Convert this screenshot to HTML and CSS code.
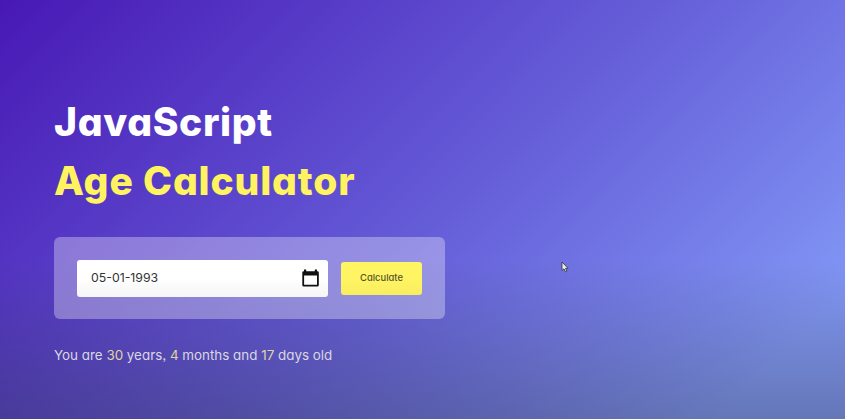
FILE: index.html
```html
<!DOCTYPE html>
<html lang="en">
<head>
<meta charset="utf-8">
<title>JavaScript Age Calculator</title>
<link rel="stylesheet" href="styles.css">
</head>
<body>
<main class="container">
  <h1 class="title"><span class="line-one">JavaScript</span><br><span class="accent">Age Calculator</span></h1>
  <div class="input-box">
    <div class="date-field">
      <span class="date">05-01-1993</span>
      <svg class="calendar" viewBox="0 0 17 18"><path fill="#111" fill-rule="evenodd" d="M2 0.5h2.200v1.700h8.600V.5H15v1.700h.5q1.300 0 1.300 1.400v12.500q0 1.500-1.400 1.500H1.700Q.3 17.600.3 16.100V3.600Q.3 2.200 1.600 2.200H2zM2.100 6.400v9.400h12.900V6.400z"/></svg>
    </div>
    <button class="calculate">Calculate</button>
  </div>
  <p class="result">You are <span>30</span> years, <span>4</span> months and <span>17</span> days old</p>
</main>
<svg class="cursor" viewBox="0 0 8 12"><path d="M1 1v8.500l2-1.700 1.500 3 1.300-.7-1.300-2.800H7z" fill="#eee" stroke="#333" stroke-width=".8"/></svg>
</body>
</html>
```
FILE: styles.css
```css
* { box-sizing: border-box; margin: 0; padding: 0; }
body {
  height: 419px;
  overflow: hidden;
  font-family: Inter, "Liberation Sans", sans-serif;
  font-feature-settings: "cv11", "ss03";
  color: #fff;
  background:
    linear-gradient(180deg, rgba(20,30,10,0) 62%, rgba(20,30,10,.26) 100%),
    linear-gradient(135deg, #4818b5 0%, #655dd8 52%, #8196f5 90%);
}
.container { padding: 92px 0 0 54px; width: 445px; }
.title { font-size: 39px; line-height: 59px; font-weight: 800; white-space: nowrap; }
.line-one { letter-spacing: 0.65px; }
.accent { color: #fff45f; letter-spacing: 0.85px; }
.input-box {
  margin-top: 27px;
  height: 82px;
  padding: 0 23px;
  display: flex;
  align-items: center;
  gap: 13px;
  border-radius: 6px;
  background: rgba(255,255,255,.32);
}
.date-field {
  width: 251px;
  height: 37px;
  padding: 0 9px 0 14px;
  display: flex;
  align-items: center;
  justify-content: space-between;
  border-radius: 3px;
  color: #333;
  font-size: 12.3px;
  background: linear-gradient(#fff 50%, #f5f5f5);
}
.date { padding-bottom: 2px; }
.calendar { width: 17px; height: 18px; }
.calculate {
  width: 81px;
  height: 33px;
  padding-bottom: 2px;
  border: 0;
  border-radius: 3px;
  background: linear-gradient(#fff562 50%, #f8ed60);
  color: #555130;
  font: 500 9.4px Inter, sans-serif;
  font-feature-settings: "cv11", "ss03";
}
.result { margin-top: 26px; font-size: 13.4px; line-height: 20px; color: #d9d7e2; white-space: nowrap; }
.result span { color: #e0d5a0; }
.cursor { position: absolute; left: 561px; top: 261px; width: 8px; height: 12px; }
```
